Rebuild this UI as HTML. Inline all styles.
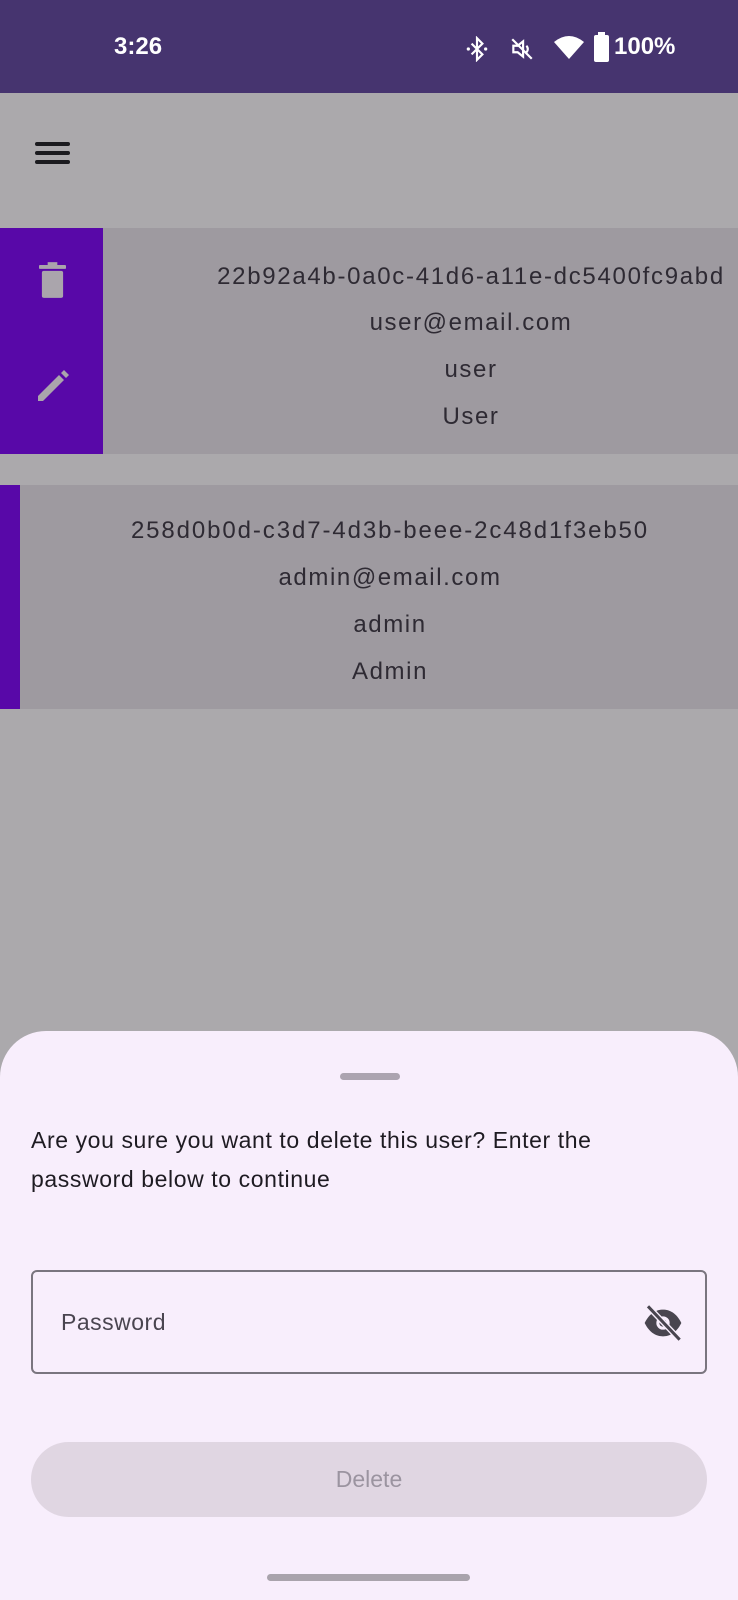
<!DOCTYPE html>
<html><head><meta charset="utf-8"><style>
*{margin:0;padding:0;box-sizing:border-box}
body{width:738px;height:1600px;overflow:hidden;background:#aba9ac;font-family:"Liberation Sans",sans-serif;position:relative}
.sb{position:absolute;left:0;top:0;width:738px;height:93px;background:#46346f;color:#fff}
.abs{position:absolute}
.card{position:absolute;left:0;width:738px;background:#9e9aa0;overflow:hidden}
.line{position:absolute;width:100%;text-align:center;font-size:24px;letter-spacing:1.6px;color:#2e2a33;line-height:28px;white-space:nowrap}
.sheet{position:absolute;left:0;top:1031px;width:738px;height:569px;background:#f8eefc;border-radius:46px 46px 0 0}
</style></head><body>
<div class="sb">
 <div class="abs" style="left:114px;top:33px;font-size:24px;font-weight:bold;">3:26</div>
 <svg class="abs" style="left:464px;top:36px" width="26" height="26" viewBox="0 0 24 24"><path d="M7 7l10 10-5 5V2l5 5L7 17" fill="none" stroke="#fff" stroke-width="2"/><circle cx="4" cy="12" r="1.5" fill="#fff"/><circle cx="20" cy="12" r="1.5" fill="#fff"/></svg>
 <svg class="abs" style="left:509px;top:36px" width="26" height="26" viewBox="0 0 24 24"><path d="M4 9h4l5-4v14l-5-4H4z" fill="none" stroke="#fff" stroke-width="2"/><path d="M16 9a4 4 0 010 6M3 3l18 18" stroke="#fff" stroke-width="2" fill="none"/></svg>
 <svg class="abs" style="left:553px;top:36px" width="32" height="24" viewBox="0 0 32 24"><path d="M1 6Q16-6 31 6L16 23z" fill="#fff"/></svg>
 <div class="abs" style="left:594px;top:35px;width:15px;height:27px;background:#fff;border-radius:2px"></div>
 <div class="abs" style="left:598px;top:32px;width:7px;height:4px;background:#fff"></div>
 <div class="abs" style="left:614px;top:33px;font-size:24px;font-weight:bold;">100%</div>
</div>
<div class="abs" style="left:35px;top:142px;width:35px;height:4px;background:#1b1b1f;border-radius:2px"></div>
<div class="abs" style="left:35px;top:151px;width:35px;height:4px;background:#1b1b1f;border-radius:2px"></div>
<div class="abs" style="left:35px;top:160px;width:35px;height:4px;background:#1b1b1f;border-radius:2px"></div>

<div class="card" style="top:228px;height:226px">
 <div class="abs" style="left:0;top:0;width:103px;height:226px;background:#5808a8"></div>
 <svg class="abs" style="left:39px;top:34px" width="27" height="36" viewBox="0 0 28 37"><rect x="0" y="3" width="28" height="4" rx="1" fill="#aaa5ac"/><rect x="9" y="0" width="10" height="4" fill="#aaa5ac"/><rect x="3" y="9" width="22" height="28" rx="2" fill="#aaa5ac"/></svg>
 <svg class="abs" style="left:35px;top:140px" width="36" height="36" viewBox="0 0 36 36"><path d="M3 28L24 7l5 5L8 33H3z M26 5l3-3 5 5-3 3z" fill="#aaa5ac"/></svg>
 <div class="line" style="left:0;padding-left:204px;top:35px;letter-spacing:1.7px">22b92a4b-0a0c-41d6-a11e-dc5400fc9abd</div>
 <div class="line" style="left:0;padding-left:204px;top:81px">user@email.com</div>
 <div class="line" style="left:0;padding-left:204px;top:128px">user</div>
 <div class="line" style="left:0;padding-left:204px;top:175px">User</div>
</div>

<div class="card" style="top:485px;height:224px">
 <div class="abs" style="left:0;top:0;width:20px;height:224px;background:#5808a8"></div>
 <div class="line" style="left:0;padding-left:42px;top:32px;letter-spacing:1.9px">258d0b0d-c3d7-4d3b-beee-2c48d1f3eb50</div>
 <div class="line" style="left:0;padding-left:42px;top:79px">admin@email.com</div>
 <div class="line" style="left:0;padding-left:42px;top:126px">admin</div>
 <div class="line" style="left:0;padding-left:42px;top:173px">Admin</div>
</div>

<div class="sheet">
 <div class="abs" style="left:340px;top:42px;width:60px;height:7px;border-radius:4px;background:#aca4b0"></div>
 <div class="abs" style="left:31px;top:90px;width:650px;font-size:23px;line-height:39px;color:#1e1b22;letter-spacing:0.6px">Are you sure you want to delete this user? Enter the password below to continue</div>
 <div class="abs" style="left:31px;top:239px;width:676px;height:104px;border:2px solid #7a757f;border-radius:6px"></div>
 <div class="abs" style="left:61px;top:278px;font-size:23px;color:#4a4550;letter-spacing:0.5px">Password</div>
 <svg class="abs" style="left:640px;top:272px" width="46" height="40" viewBox="0 0 24 24"><path d="M1 12C4 6 8 4 12 4s8 2 11 8c-3 6-7 8-11 8s-8-2-11-8z" fill="#49454f"/><circle cx="12" cy="12" r="4" fill="#f8eefc"/><circle cx="12" cy="12" r="2.2" fill="#49454f"/><path d="M3 2l19 20" stroke="#f8eefc" stroke-width="3.5"/><path d="M3 2l19 20" stroke="#49454f" stroke-width="1.8"/></svg>
 <div class="abs" style="left:31px;top:411px;width:676px;height:75px;border-radius:38px;background:#e0d6e2;text-align:center;line-height:75px;font-size:23px;color:#9b94a0">Delete</div>
 <div class="abs" style="left:267px;top:543px;width:203px;height:7px;border-radius:4px;background:#a9a3ac"></div>
</div>
</body></html>
